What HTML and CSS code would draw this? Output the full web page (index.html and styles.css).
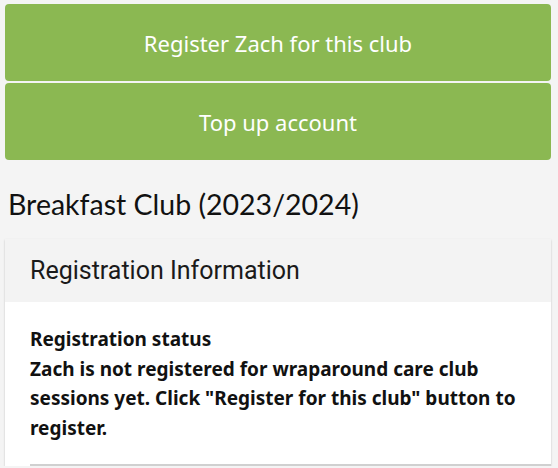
FILE: index.html
```html
<!DOCTYPE html>
<html>
<head>
<meta charset="utf-8">
<link rel="stylesheet" href="styles.css">
</head>
<body>
<div class="page">
  <div class="actions">
    <a class="btn">Register Zach for this club</a>
    <a class="btn">Top up account</a>
  </div>
  <h1 class="title">Breakfast Club (2023/2024)</h1>
  <section class="panel">
    <div class="panel-head">Registration Information</div>
    <div class="panel-body">
      <div class="row">
        <div class="label">Registration status</div>
        <div class="value">Zach is not registered for wraparound care club sessions yet. Click "Register for this club" button to register.</div>
      </div>
    </div>
  </section>
</div>
</body>
</html>
```

FILE: styles.css
```css
html, body {
  margin: 0;
  padding: 0;
  background: #f4f4f4;
  font-family: Lato, "Noto Sans", sans-serif;
  color: #111;
}
.page {
  padding: 4px 7px 0 5px;
}
.actions {
  display: flex;
  flex-direction: column;
  gap: 2px;
}
.btn {
  display: flex;
  align-items: center;
  justify-content: center;
  height: 77px;
  background: #8bb852;
  color: #fff;
  font-family: "Noto Sans", sans-serif;
  font-size: 22px;
  border-radius: 4px;
}
.title {
  margin: 26px 0 0 3px;
  font-weight: normal;
  font-size: 28.5px;
  line-height: 36px;
}
.panel {
  margin-top: 17px;
  background: #fff;
  box-shadow: 0 1px 2px rgba(0, 0, 0, 0.2);
}
.panel-head {
  background: #f3f3f3;
  height: 63px;
  display: flex;
  align-items: center;
  padding-left: 25px;
  font-family: Roboto, sans-serif;
  font-size: 25px;
  color: #1a1a1a;
}
.panel-body {
  padding: 23px 0 0 25px;
}
.row {
  padding-bottom: 21px;
  border-bottom: 2px solid #d0d0d0;
  font-family: "Noto Sans", sans-serif;
  font-weight: bold;
  font-size: 19px;
  line-height: 29.5px;
  padding-right: 20px;
}
```
